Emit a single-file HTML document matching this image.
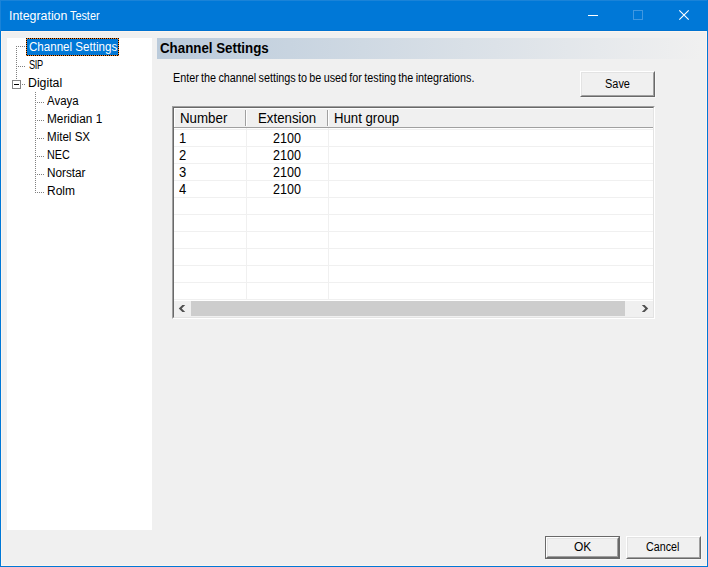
<!DOCTYPE html>
<html>
<head>
<meta charset="utf-8">
<title>Integration Tester</title>
<style>
html,body{margin:0;padding:0;}
body{width:708px;height:567px;overflow:hidden;background:#f0f0f0;position:relative;font-family:"Liberation Sans",sans-serif;font-size:12px;color:#000;}
.abs{position:absolute;}
.t{position:absolute;white-space:pre;line-height:18px;height:18px;transform-origin:0 50%;}
/* window frame */
#titlebar{left:0;top:0;width:708px;height:31px;background:#0078d7;}
#bl{left:0;top:0;width:1px;height:31px;background:#1a83d8;}
#br{left:707px;top:0;width:1px;height:567px;background:#0078d7;}
#bb{left:0;top:566px;width:708px;height:1px;background:#0078d7;}
#bl2{left:0;top:31px;width:1px;height:536px;background:#0078d7;}
#halo{left:1px;top:31px;width:706px;height:535px;box-sizing:border-box;border:1px solid #fdf5ee;}
#tb2{left:1px;top:30px;width:706px;height:1px;background:#0072d0;}
#bt{left:0;top:0;width:708px;height:1px;background:#1a83d8;}
#titleA,#titleB{color:#fff;font-size:12px;}
/* tree */
#tree{left:7px;top:38px;width:145px;height:492px;background:#fff;}
.vd{position:absolute;width:1px;background:repeating-linear-gradient(to bottom,#808080 0,#808080 1px,transparent 1px,transparent 2px);}
.hd{position:absolute;height:1px;background:repeating-linear-gradient(to right,#808080 0,#808080 1px,transparent 1px,transparent 2px);}
#sel{left:26px;top:38px;width:93px;height:18px;background:#0078d7;box-sizing:border-box;}
/* right pane */
#hdr{left:157px;top:38px;width:544px;height:21px;background:linear-gradient(to right,#bbcbdb 0%,#f0f0f0 100%);}
#hdrt{font-size:13.33px;font-weight:bold;line-height:21px;height:21px;}
#desc{word-spacing:-0.8px;}
#t1{letter-spacing:-0.4px;}
.btn{position:absolute;box-sizing:border-box;background:#f0f0f0;box-shadow:1px 1px 0 #f7f7f7;border-style:solid;border-width:1px;border-color:#fff #696969 #696969 #fff;}
.btn i{position:absolute;left:0;top:0;right:0;bottom:0;border-style:solid;border-width:1px;border-color:#e3e3e3 #a0a0a0 #a0a0a0 #e3e3e3;}
.btn.def{border-color:#696969;}
.btn.def i{border-color:#fff #696969 #696969 #fff;}
.btn.def b{position:absolute;left:1px;top:1px;right:1px;bottom:1px;border-style:solid;border-width:1px;border-color:#e3e3e3 #a0a0a0 #a0a0a0 #e3e3e3;}
/* list */
#list{left:172px;top:106px;width:483px;height:213px;box-sizing:border-box;border-style:solid;border-width:1px;border-color:#a0a0a0 #fff #fff #a0a0a0;}
#list .in{position:absolute;left:0;top:0;right:0;bottom:0;border-style:solid;border-width:1px;border-color:#696969 #e3e3e3 #e3e3e3 #696969;background:#fff;}
#lh{left:174px;top:108px;width:479px;height:19px;background:#f0f0f0;border-top:1px solid #fff;border-left:1px solid #fff;box-sizing:border-box;}
#lhb{left:174px;top:127px;width:479px;height:1px;background:#a0a0a0;}
.sep{position:absolute;top:110px;width:1px;height:16px;background:#a0a0a0;}
.sepw{position:absolute;top:110px;width:1px;height:16px;background:#fff;}
.gh{position:absolute;left:174px;width:479px;height:1px;background:#f0f0f0;}
.gv{position:absolute;top:128px;width:1px;height:172px;background:#f0f0f0;}
.lt{position:absolute;white-space:pre;font-size:13.33px;line-height:17px;height:17px;transform-origin:0 50%;}
#sb{left:174px;top:301px;width:479px;height:16px;background:#f0f0f0;}
#thumb{left:191px;top:301px;width:434px;height:15px;background:#cdcdcd;}
#t0{left:29.00px;top:38.00px;transform:scale(0.9649,1.0000);}
#t1{left:29.00px;top:56.00px;transform:scale(0.7668,1.0000);}
#t2{left:28.00px;top:74.00px;transform:scale(1.0250,1.0000);}
#t3{left:47.00px;top:92.00px;transform:scale(0.9529,1.0000);}
#t4{left:47.00px;top:110.00px;transform:scale(0.9855,1.0000);}
#t5{left:47.00px;top:128.00px;transform:scale(0.9637,1.0000);}
#t6{left:47.00px;top:146.00px;transform:scale(0.9012,1.0000);}
#t7{left:47.00px;top:164.00px;transform:scale(0.9796,1.0000);}
#t8{left:47.00px;top:182.00px;}
#hdrt{left:160.00px;top:38.00px;font-size:14px;transform:scale(0.9509,1.0000);}
#desc{left:173.00px;top:69.00px;font-size:12px;transform:scale(0.9003,1.0000);}
#tsave{left:605.00px;top:75.00px;transform:scale(0.9118,1.0000);}
#h0{left:180.00px;top:110.00px;font-size:14px;transform:scale(0.9512,1.0000);}
#h1{left:258.00px;top:110.00px;font-size:14px;transform:scale(0.9468,1.0000);}
#h2{left:334.00px;top:110.00px;font-size:14px;transform:scale(0.9412,1.0000);}
#r0{left:179.00px;top:130.00px;font-size:14px;transform:scale(0.9300,1.0000);}
#r1{left:179.00px;top:147.00px;font-size:14px;transform:scale(0.9300,1.0000);}
#r2{left:179.00px;top:164.00px;font-size:14px;transform:scale(0.9300,1.0000);}
#r3{left:179.00px;top:181.00px;font-size:14px;transform:scale(0.9300,1.0000);}
#e0{left:273.00px;top:130.00px;font-size:14px;transform:scale(0.8971,1.0000);}
#e1{left:273.00px;top:147.00px;font-size:14px;transform:scale(0.8971,1.0000);}
#e2{left:273.00px;top:164.00px;font-size:14px;transform:scale(0.8971,1.0000);}
#e3{left:273.00px;top:181.00px;font-size:14px;transform:scale(0.8971,1.0000);}
#tok{left:574.00px;top:538.00px;}
#tcancel{left:646.00px;top:538.00px;transform:scale(0.8923,1.0000);}
#titleA{left:9.00px;top:7.30px;transform:scale(1.0291,1.0000);}
#titleB{left:70.00px;top:7.30px;transform:scale(0.9033,1.0000);}
</style>
</head>
<body>
<!-- frame -->
<div class="abs" id="titlebar"></div>
<div class="abs" id="bt"></div>
<div class="abs" id="bl"></div>
<div class="abs" id="br"></div>
<div class="abs" id="bb"></div>
<div class="abs" id="bl2"></div>
<div class="abs" id="halo"></div>
<div class="abs" id="tb2"></div>
<div class="t" id="titleA">Integration</div><div class="t" id="titleB">Tester</div>
<svg class="abs" style="left:580px;top:0" width="128" height="31" viewBox="0 0 128 31">
  <rect x="8" y="15" width="10" height="1" fill="#fff"/>
  <rect x="53.5" y="10.5" width="9" height="9" fill="none" stroke="#4098e1" stroke-width="1"/>
  <path d="M99.3 10.3 L108.7 19.7 M108.7 10.3 L99.3 19.7" stroke="#fff" stroke-width="1.1" fill="none"/>
</svg>

<!-- tree -->
<div class="abs" id="tree"></div>
<div class="vd" style="left:16px;top:46px;height:33px"></div>
<div class="hd" style="left:16px;top:46px;width:9px"></div>
<div class="hd" style="left:16px;top:66px;width:9px"></div>
<div class="hd" style="left:22px;top:84px;width:3px"></div>
<div class="vd" style="left:35px;top:92px;height:101px"></div>
<div class="hd" style="left:35px;top:102px;width:9px"></div>
<div class="hd" style="left:35px;top:120px;width:9px"></div>
<div class="hd" style="left:35px;top:138px;width:9px"></div>
<div class="hd" style="left:35px;top:156px;width:9px"></div>
<div class="hd" style="left:35px;top:174px;width:9px"></div>
<div class="hd" style="left:35px;top:192px;width:9px"></div>
<!-- expander -->
<div class="abs" style="left:12px;top:80px;width:9px;height:9px;box-sizing:border-box;border:1px solid #848484;background:#fff"></div>
<div class="abs" style="left:14px;top:84px;width:5px;height:1px;background:#000"></div>

<div class="abs" id="sel"></div>
<div class="abs" style="left:26px;top:38px;width:93px;height:1px;background:repeating-linear-gradient(to right,#000 0,#000 1px,#ff8728 1px,#ff8728 2px)"></div>
<div class="abs" style="left:26px;top:55px;width:93px;height:1px;background:repeating-linear-gradient(to right,#ff8728 0,#ff8728 1px,#000 1px,#000 2px)"></div>
<div class="abs" style="left:26px;top:38px;width:1px;height:18px;background:repeating-linear-gradient(to bottom,#000 0,#000 1px,#ff8728 1px,#ff8728 2px)"></div>
<div class="abs" style="left:118px;top:38px;width:1px;height:18px;background:repeating-linear-gradient(to bottom,#000 0,#000 1px,#ff8728 1px,#ff8728 2px)"></div>
<div class="t" style="color:#fff" id="t0">Channel Settings</div>
<div class="t" id="t1">SIP</div>
<div class="t" id="t2">Digital</div>
<div class="t" id="t3">Avaya</div>
<div class="t" id="t4">Meridian 1</div>
<div class="t" id="t5">Mitel SX</div>
<div class="t" id="t6">NEC</div>
<div class="t" id="t7">Norstar</div>
<div class="t" id="t8">Rolm</div>

<!-- right pane -->
<div class="abs" id="hdr"></div>
<div class="t" id="hdrt">Channel Settings</div>
<div class="t" id="desc">Enter the channel settings to be used for testing the integrations.</div>

<div class="btn" style="left:580px;top:71px;width:75px;height:26px"><i></i></div>
<div class="t" id="tsave" >Save</div>

<!-- list -->
<div class="abs" id="list"><div class="in"></div></div>
<div class="abs" id="lh"></div>
<div class="abs" id="lhb"></div>
<div class="sep" style="left:245px"></div><div class="sepw" style="left:246px"></div>
<div class="sep" style="left:327px"></div><div class="sepw" style="left:328px"></div>
<div class="gv" style="left:246px"></div>
<div class="gv" style="left:328px"></div>
<div class="gh" style="top:129px"></div>
<div class="gh" style="top:146px"></div>
<div class="gh" style="top:163px"></div>
<div class="gh" style="top:180px"></div>
<div class="gh" style="top:197px"></div>
<div class="gh" style="top:214px"></div>
<div class="gh" style="top:231px"></div>
<div class="gh" style="top:248px"></div>
<div class="gh" style="top:265px"></div>
<div class="gh" style="top:282px"></div>
<div class="gh" style="top:299px"></div>
<div class="lt" id="h0" >Number</div>
<div class="lt" id="h1" >Extension</div>
<div class="lt" id="h2" >Hunt group</div>
<div class="lt" id="r0" >1</div>
<div class="lt" id="r1" >2</div>
<div class="lt" id="r2" >3</div>
<div class="lt" id="r3" >4</div>
<div class="lt" id="e0" >2100</div>
<div class="lt" id="e1" >2100</div>
<div class="lt" id="e2" >2100</div>
<div class="lt" id="e3" >2100</div>
<div class="abs" id="sb"></div>
<div class="abs" id="thumb"></div>
<svg class="abs" style="left:174px;top:300px" width="17" height="17" viewBox="174 300 17 17">
  <polygon points="185.2,305 182.4,305 178.8,308.5 182.4,312 185.2,312 181.7,308.5" fill="#505050"/>
</svg>
<svg class="abs" style="left:636px;top:300px" width="17" height="17" viewBox="636 300 17 17">
  <polygon points="641.8,305 644.6,305 648.2,308.5 644.6,312 641.8,312 645.3,308.5" fill="#505050"/>
</svg>

<!-- bottom buttons -->
<div class="btn def" style="left:545px;top:536px;width:75px;height:23px"><i></i><b></b></div>
<div class="t" id="tok" >OK</div>
<div class="btn" style="left:626px;top:536px;width:75px;height:23px"><i></i></div>
<div class="t" id="tcancel" >Cancel</div>
</body>
</html>
